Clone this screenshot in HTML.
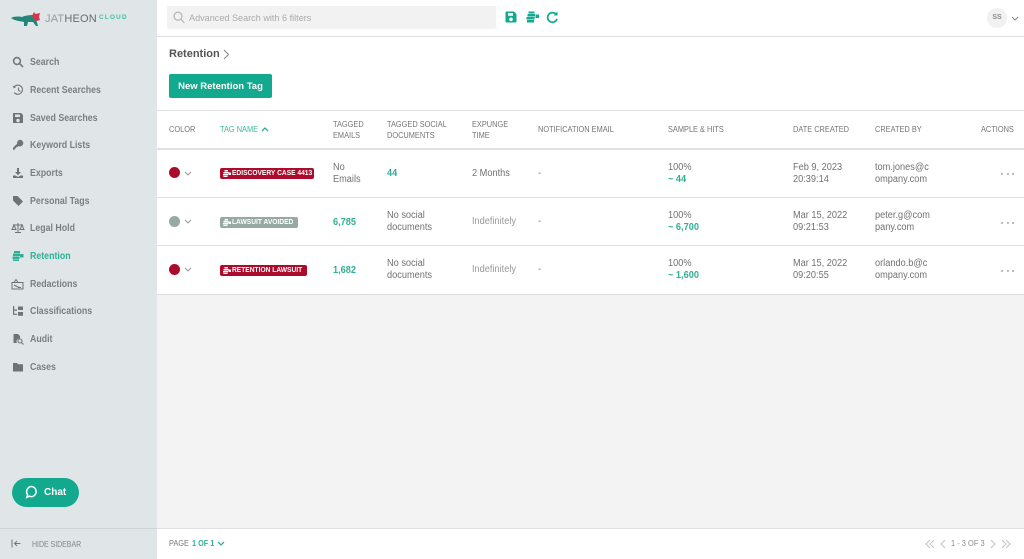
<!DOCTYPE html>
<html><head><meta charset="utf-8"><title>Retention</title>
<style>
html,body{margin:0;padding:0;width:1024px;height:559px;overflow:hidden;background:#f3f3f3;font-family:"Liberation Sans",sans-serif;color:#666}
.a{position:absolute;white-space:nowrap}
.line{position:absolute;background:#e0e0e0;height:2px;left:157px;width:867px}
.nav{position:absolute;left:30px;font-size:10px;font-weight:bold;color:#7b7f81;line-height:12px;transform:scaleX(.88);transform-origin:0 0;white-space:nowrap}
.ic{position:absolute;left:12px;width:12px;height:12px}
.th{position:absolute;font-size:8.6px;line-height:11.5px;color:#757575;white-space:nowrap;transform:scaleX(.86);transform-origin:0 0}
.td{position:absolute;font-size:10px;line-height:11.5px;color:#717171;white-space:nowrap;transform:scaleX(.92);transform-origin:0 0}
.g{color:#2fb096;font-weight:bold}
.dot{position:absolute;left:169px;width:11px;height:11px;border-radius:50%}
.tag{position:absolute;left:220px;height:11px;border-radius:2px;color:#fff;font-size:7px;font-weight:bold;line-height:11px;white-space:nowrap;padding-left:12px;box-sizing:border-box}
.tag svg{position:absolute;left:3px;top:2px}
.tag span{display:inline-block;transform:scaleX(.95);transform-origin:0 0}
.dots{position:absolute;left:1001px;font-size:0}
.dots i{display:inline-block;width:2px;height:2px;background:#a8a8a8;border-radius:50%;margin-right:3.5px}
svg{display:block}
</style></head><body>
<div class="a" style="left:157px;top:0;width:867px;height:294px;background:#fff"></div>
<div class="a" style="left:157px;top:528px;width:867px;height:31px;background:#fff"></div>
<div class="a" style="left:0;top:0;width:157px;height:559px;background:#e0e5e8"></div>
<div class="a" style="left:0;top:528px;width:157px;height:1px;background:#ced3d6"></div>
<div class="line" style="top:36px;height:1px"></div>
<div class="line" style="top:110px;height:1px"></div>
<div class="line" style="top:148px"></div>
<div class="line" style="top:197px;height:1px"></div>
<div class="line" style="top:245px;height:1px"></div>
<div class="line" style="top:294px;height:1px;background:#dcdcdc"></div>
<div class="line" style="top:528px;height:1px"></div>

<!-- logo -->
<svg class="a" style="left:0;top:0" width="44" height="30" viewBox="0 0 44 30">
<path d="M11 18 C15 16 19 16.500 22 17 C25 15.500 29 15 33 15 L36 19 L38 26 L36 26 L33 22 L28 22 L27 26 L24 26 L24 22 C20 21 15 21 11 18Z" fill="#24857a"/>
<path d="M32 16 L34 12 L35.500 14 L40 13 L39 17 L40 20 L37 21 L34 19 Z" fill="#d8344a"/>
</svg>
<div class="a" style="left:45px;top:12px;font-size:11px;line-height:14px;letter-spacing:.2px;color:#949c9f">JAT<span style="color:#666e71">HEON</span></div>
<div class="a" style="left:99px;top:13px;font-size:6.5px;line-height:10px;font-weight:bold;letter-spacing:1.1px;color:#45bfa8">CLOUD</div>

<!-- nav icons -->
<svg class="ic" style="top:56px" viewBox="0 0 12 12" fill="none" stroke="#777" stroke-width="1.6"><circle cx="5" cy="5" r="3.4"/><path d="M7.6 7.6L11 11"/></svg>
<svg class="ic" style="top:84px" viewBox="0 0 12 12" fill="none" stroke="#777" stroke-width="1.1"><path d="M2 3.2A4.6 4.6 0 1 1 2.2 8.5"/><path d="M6.5 3.5V6.3L8.4 7.5"/><path d="M.6 1.6L1.6 4.4 4 3.2" fill="#777" stroke="none"/></svg>
<svg class="ic" style="top:112px" viewBox="0 0 12 12"><path fill="#6f7375" d="M1 1.5A.5.5 0 0 1 1.5 1H9l2 2v7.5a.5.5 0 0 1-.5.5h-9a.5.5 0 0 1-.5-.5zM3 2.5V5h5V2.5zM6 6.8a1.7 1.7 0 1 0 0 3.4 1.7 1.7 0 0 0 0-3.4z" fill-rule="evenodd"/></svg>
<svg class="ic" style="top:139px" viewBox="0 0 12 12"><path fill="#6f7375" d="M8 .8a3.3 3.3 0 1 1-1.6 6.2L5.2 8.2H4v1.2H2.8v1.3H1V8.8l4.1-4.1A3.3 3.3 0 0 1 8 .8z"/></svg>
<svg class="ic" style="top:167px" viewBox="0 0 12 12"><path fill="#6f7375" d="M5 1h2v4h2L6 8.2 3 5h2zM1 8.5h2.6L6 10l2.4-1.5H11V11H1z"/></svg>
<svg class="ic" style="top:195px" viewBox="0 0 12 12"><path fill="#6f7375" d="M1 1h4.5L11 6.5 6.5 11 1 5.5z"/></svg>
<svg class="ic" style="top:222px;left:11px;width:14px" viewBox="0 0 14 12" fill="none" stroke="#6f7375" stroke-width="1"><path d="M7 1v9M4 10.5h6M2 3h10M3 3L1 7.5h4zM11 3L9 7.5h4z"/></svg>
<svg class="ic" style="top:250px" viewBox="0 0 12 12"><path fill="#2fb096" d="M2 1h6v2H2zM1 3.5h7V6H1zM8 4h3.5v3.5H8zM.5 6.5h7V9h-7zM1 9.5h6V11H1z"/></svg>
<svg class="ic" style="top:278px;left:11px;width:13px" viewBox="0 0 13 12" fill="none" stroke="#6f7375" stroke-width="1"><path d="M1 4.5h11V11H1zM3 4.5L5 1.5l2 3"/><path d="M3 7l5 2.5M7 9.5h3"/></svg>
<svg class="ic" style="top:305px" viewBox="0 0 12 12"><path fill="#6f7375" d="M1 1h1.2v3.5H5v1.2H2.2v3H5v1.2H1zM6 1.5h5v3.5H6zM6 7h5v3.8H6z"/></svg>
<svg class="ic" style="top:333px" viewBox="0 0 12 12"><path fill="#6f7375" d="M1.5 1H6l2 2v2.5a3 3 0 0 0-3 4.5H1.5z"/><circle cx="8" cy="8" r="2" fill="none" stroke="#6f7375"/><path d="M9.5 9.5L11.5 11.5" stroke="#6f7375"/></svg>
<svg class="ic" style="top:361px" viewBox="0 0 12 12"><path fill="#6f7375" d="M1 2h4l1 1.2h5V10.5H1z"/></svg>

<div class="nav" style="top:57px">Search</div>
<div class="nav" style="top:85px">Recent Searches</div>
<div class="nav" style="top:113px">Saved Searches</div>
<div class="nav" style="top:140px">Keyword Lists</div>
<div class="nav" style="top:168px">Exports</div>
<div class="nav" style="top:196px">Personal Tags</div>
<div class="nav" style="top:223px">Legal Hold</div>
<div class="nav" style="top:251px;color:#2fb096">Retention</div>
<div class="nav" style="top:279px">Redactions</div>
<div class="nav" style="top:306px">Classifications</div>
<div class="nav" style="top:334px">Audit</div>
<div class="nav" style="top:362px">Cases</div>

<!-- chat -->
<div class="a" style="left:12px;top:478px;width:67px;height:29px;border-radius:15px;background:#13a98e"></div>
<svg class="a" style="left:25px;top:485px" width="14" height="14" viewBox="0 0 14 14" fill="none" stroke="#fff" stroke-width="1.5"><path d="M7 1.5a5.2 5.2 0 0 1 0 10.2c-1 0-1.8-.2-2.5-.6L1.8 12.4l.8-2.7A5.2 5.2 0 0 1 7 1.5z"/></svg>
<div class="a" style="left:44px;top:486px;font-size:10px;line-height:13px;font-weight:bold;color:#fff">Chat</div>

<!-- hide sidebar -->
<svg class="a" style="left:11px;top:539px" width="10" height="9" viewBox="0 0 10 9" fill="none" stroke="#777" stroke-width="1"><path d="M1 .5v8M9.5 4.5H3.5M6 2L3.5 4.5 6 7"/></svg>
<div class="a" style="left:32px;top:539px;font-size:8px;line-height:11px;color:#828689;transform:scaleX(.87);transform-origin:0 0">HIDE SIDEBAR</div>

<!-- top bar -->
<div class="a" style="left:167px;top:6px;width:329px;height:23px;background:#f2f2f2;border-radius:2px"></div>
<svg class="a" style="left:173px;top:11px" width="12" height="13" viewBox="0 0 12 13" fill="none" stroke="#b9b9b9" stroke-width="1.3"><circle cx="5" cy="5.2" r="4"/><path d="M8 8.2l3.2 3.6"/></svg>
<div class="a" style="left:189px;top:11px;font-size:9.4px;line-height:13px;color:#aaa;transform:scaleX(.97);transform-origin:0 0">Advanced Search with 6 filters</div>
<svg class="a" style="left:505px;top:11px" width="12" height="12" viewBox="0 0 12 12"><path fill="#13a98e" fill-rule="evenodd" d="M.5 1.5A1 1 0 0 1 1.5.5H9L11.5 3v7.5a1 1 0 0 1-1 1h-9a1 1 0 0 1-1-1zM3 2v2.8h5V2zM6 6.5a1.8 1.8 0 1 0 0 3.6 1.8 1.8 0 0 0 0-3.6z"/></svg>
<svg class="a" style="left:526px;top:11px" width="13" height="12" viewBox="0 0 13 12"><path fill="#13a98e" d="M2.5.5h6v2h-6zM1.5 3h7.5v2.500H1.500zM9.500 3.500h3.500v3.500H9.500zM.5 6h8v2.500H.5zM1 9h7v2.500H1z"/></svg>
<svg class="a" style="left:546px;top:11px" width="13" height="13" viewBox="0 0 13 13" fill="none" stroke="#13a98e" stroke-width="1.7"><path d="M10 3.200A4.800 4.800 0 1 0 11 8"/><path d="M11.500.5v4h-4" fill="#13a98e" stroke="none"/></svg>
<div class="a" style="left:987px;top:8px;width:20px;height:20px;border-radius:50%;background:#f1f1f1;text-align:center;font-size:7px;font-weight:bold;line-height:20px;color:#8a8a8a">SS</div>
<svg class="a" style="left:1011px;top:16px" width="8" height="5" viewBox="0 0 8 5" fill="none" stroke="#888" stroke-width="1.100"><path d="M1 1l3 3 3-3"/></svg>

<!-- heading -->
<div class="a" style="left:169px;top:47px;font-size:11px;line-height:14px;font-weight:bold;color:#555">Retention</div>
<svg class="a" style="left:223px;top:49px" width="7" height="11" viewBox="0 0 7 11" fill="none" stroke="#8c8c8c" stroke-width="1.100"><path d="M1 1l4.500 4.500L1 10"/></svg>
<div class="a" style="left:169px;top:74px;width:103px;height:24px;border-radius:2px;background:#13a98e;color:#fff;font-size:9.500px;font-weight:bold;line-height:25px;text-align:center">New Retention Tag</div>

<!-- table head -->
<div class="th" style="left:169px;top:124px">COLOR</div>
<div class="th" style="left:220px;top:124px;color:#3fb5a0">TAG NAME</div>
<svg class="a" style="left:261px;top:127px" width="8" height="5" viewBox="0 0 8 5" fill="none" stroke="#2fb096" stroke-width="1.300"><path d="M1 4l3-3 3 3"/></svg>
<div class="th" style="left:333px;top:118.500px">TAGGED<br>EMAILS</div>
<div class="th" style="left:387px;top:118.500px">TAGGED SOCIAL<br>DOCUMENTS</div>
<div class="th" style="left:472px;top:118.500px">EXPUNGE<br>TIME</div>
<div class="th" style="left:538px;top:124px">NOTIFICATION EMAIL</div>
<div class="th" style="left:668px;top:124px">SAMPLE &amp; HITS</div>
<div class="th" style="left:793px;top:124px">DATE CREATED</div>
<div class="th" style="left:875px;top:124px">CREATED BY</div>
<div class="th" style="left:981px;top:124px">ACTIONS</div>

<!-- row 1 -->
<div class="dot" style="top:167px;background:#ac0b2c"></div>
<svg class="a" style="left:184px;top:171px" width="8" height="5" viewBox="0 0 8 5" fill="none" stroke="#999" stroke-width="1"><path d="M1 1l3 3 3-3"/></svg>
<div class="tag" style="top:168px;width:94px;background:#ac0b2c"><svg width="8" height="7" viewBox="0 0 8 7"><path fill="#fff" d="M1.500 0h3.500v1.500H1.500zM.5 2h5v1.500H.5zM5.500 2.500H8V5H5.500zM0 4h5v1.500H0zM.5 6h4v1H.5z"/></svg><span>EDISCOVERY CASE 4413</span></div>
<div class="td" style="left:333px;top:162px">No<br>Emails</div>
<div class="td g" style="left:387px;top:168px">44</div>
<div class="td" style="left:472px;top:168px">2 Months</div>
<div class="td" style="left:538px;top:168px">-</div>
<div class="td" style="left:668px;top:162px">100%<br><span class="g">~ 44</span></div>
<div class="td" style="left:793px;top:162px">Feb 9, 2023<br>20:39:14</div>
<div class="td" style="left:875px;top:162px">tom.jones@c<br>ompany.com</div>
<div class="dots" style="top:173px"><i></i><i></i><i></i></div>

<!-- row 2 -->
<div class="dot" style="top:216px;background:#96a9a5"></div>
<svg class="a" style="left:184px;top:219px" width="8" height="5" viewBox="0 0 8 5" fill="none" stroke="#999" stroke-width="1"><path d="M1 1l3 3 3-3"/></svg>
<div class="tag" style="top:216.500px;width:78px;background:#96a9a5"><svg width="8" height="7" viewBox="0 0 8 7"><path fill="#fff" d="M1.500 0h3.500v1.500H1.500zM.5 2h5v1.500H.5zM5.500 2.500H8V5H5.500zM0 4h5v1.500H0zM.5 6h4v1H.5z"/></svg><span>LAWSUIT AVOIDED</span></div>
<div class="td g" style="left:333px;top:217px">6,785</div>
<div class="td" style="left:387px;top:210px">No social<br>documents</div>
<div class="td" style="left:472px;top:216px;color:#999">Indefinitely</div>
<div class="td" style="left:538px;top:216px">-</div>
<div class="td" style="left:668px;top:210px">100%<br><span class="g">~ 6,700</span></div>
<div class="td" style="left:793px;top:210px">Mar 15, 2022<br>09:21:53</div>
<div class="td" style="left:875px;top:210px">peter.g@com<br>pany.com</div>
<div class="dots" style="top:222px"><i></i><i></i><i></i></div>

<!-- row 3 -->
<div class="dot" style="top:264px;background:#ac0b2c"></div>
<svg class="a" style="left:184px;top:267px" width="8" height="5" viewBox="0 0 8 5" fill="none" stroke="#999" stroke-width="1"><path d="M1 1l3 3 3-3"/></svg>
<div class="tag" style="top:265px;width:87px;background:#ac0b2c"><svg width="8" height="7" viewBox="0 0 8 7"><path fill="#fff" d="M1.500 0h3.500v1.500H1.500zM.5 2h5v1.500H.5zM5.500 2.500H8V5H5.500zM0 4h5v1.500H0zM.5 6h4v1H.5z"/></svg><span>RETENTION LAWSUIT</span></div>
<div class="td g" style="left:333px;top:265px">1,682</div>
<div class="td" style="left:387px;top:258px">No social<br>documents</div>
<div class="td" style="left:472px;top:264px;color:#999">Indefinitely</div>
<div class="td" style="left:538px;top:264px">-</div>
<div class="td" style="left:668px;top:258px">100%<br><span class="g">~ 1,600</span></div>
<div class="td" style="left:793px;top:258px">Mar 15, 2022<br>09:20:55</div>
<div class="td" style="left:875px;top:258px">orlando.b@c<br>ompany.com</div>
<div class="dots" style="top:270px"><i></i><i></i><i></i></div>

<!-- footer -->
<div class="th" style="left:169px;top:538px">PAGE</div>
<div class="a" style="left:192px;top:538px;font-size:8.600px;line-height:11.500px;font-weight:bold;color:#2fb096;transform:scaleX(.85);transform-origin:0 0">1 OF 1</div>
<svg class="a" style="left:217px;top:541px" width="8" height="5" viewBox="0 0 8 5" fill="none" stroke="#2fb096" stroke-width="1.300"><path d="M1 1l3 3 3-3"/></svg>
<svg class="a" style="left:925px;top:539px" width="21" height="10" viewBox="0 0 21 10" fill="none" stroke="#c4c4c4" stroke-width="1.100"><path d="M5 1L1 5l4 4M9 1L5 5l4 4M20 1l-4 4 4 4"/></svg>
<div class="a" style="left:951px;top:538px;font-size:8.600px;line-height:11.500px;color:#8a8a8a;transform:scaleX(.87);transform-origin:0 0">1 - 3 OF 3</div>
<svg class="a" style="left:990px;top:539px" width="21" height="10" viewBox="0 0 21 10" fill="none" stroke="#c4c4c4" stroke-width="1.100"><path d="M1 1l4 4-4 4M12 1l4 4-4 4M16 1l4 4-4 4"/></svg>
</body></html>
